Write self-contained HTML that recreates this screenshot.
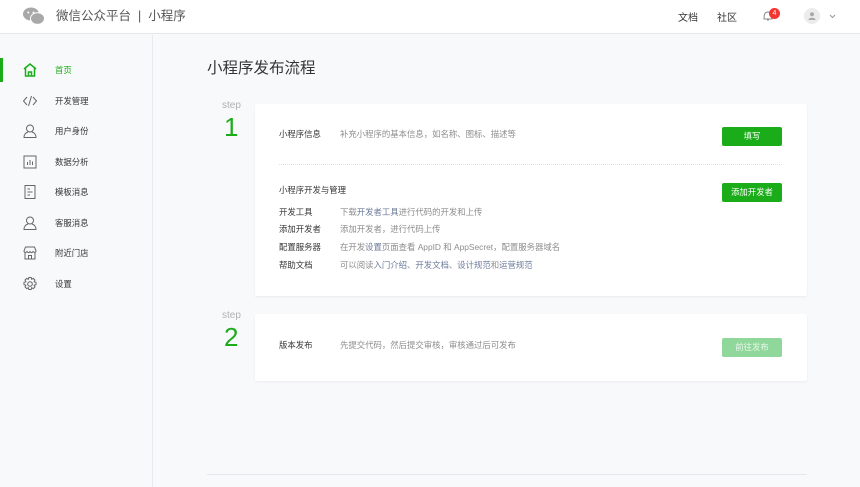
<!DOCTYPE html>
<html><head><meta charset="utf-8"><style>
*{margin:0;padding:0;box-sizing:border-box}
body{width:860px;height:487px;overflow:hidden;background:#f8f9fb;font-family:"Liberation Sans","Noto Sans CJK SC",sans-serif;position:relative;color:#353535}
.a{position:absolute;white-space:nowrap}
#hd{position:absolute;left:0;top:0;width:860px;height:34px;background:#fff;border-bottom:1px solid #e6e7ea}
#sb{position:absolute;left:0;top:35px;width:153px;height:452px;border-right:1px solid #e8e9ec;background:#f8f9fb}
.nav{position:absolute;left:55px;font-size:8.4px;color:#353535;line-height:12px}
.ic{position:absolute;left:22px;width:16px;height:16px}
.card{position:absolute;left:255px;width:552px;background:#fff;box-shadow:0 1px 2px rgba(0,0,0,.06);border-radius:2px}
.lb{position:absolute;left:24px;font-size:8.4px;color:#353535;line-height:12px;white-space:nowrap}
.ds{position:absolute;left:85px;font-size:8.4px;color:#8d8d8d;line-height:12px;white-space:nowrap}
.ds b{font-weight:normal;color:#6b7a99}
.btn{position:absolute;left:467px;width:60px;height:19px;background:#1aad19;color:#fff;font-size:8.4px;text-align:center;line-height:19px;border-radius:2px}
.st{position:absolute;left:222px;font-size:10px;color:#b2b2b2}
.num{position:absolute;font-size:26px;color:#1aad19;line-height:26px}
</style></head><body>
<div id="hd">
<svg class="a" style="left:23px;top:7px" width="22" height="18" viewBox="0 0 22 18"><ellipse cx="8" cy="7" rx="8" ry="6.5" fill="#a8a8a8"/><ellipse cx="14.5" cy="11.5" rx="7" ry="5.8" fill="#a8a8a8" stroke="#fff" stroke-width="1"/><circle cx="5.3" cy="5.5" r="1" fill="#fff"/><circle cx="10.5" cy="5.5" r="1" fill="#fff"/></svg>
<div class="a" style="left:56px;top:8px;font-size:12.5px;color:#555;line-height:17px">微信公众平台<span style="margin:0 7px">|</span>小程序</div>
<div class="a" style="left:678px;top:9px;font-size:10px;color:#353535">文档</div>
<div class="a" style="left:717px;top:9px;font-size:10px;color:#353535">社区</div>
<svg class="a" style="left:762px;top:10px" width="12" height="12" viewBox="0 0 12 12"><path d="M2 9 C2 4 3 2 6 2 C9 2 10 4 10 9 Z M5 10h2" fill="none" stroke="#888" stroke-width="1"/></svg>
<div class="a" style="left:769px;top:8px;width:11px;height:11px;border-radius:50%;background:#f43530;color:#fff;font-size:7px;text-align:center;line-height:11px">4</div>
<div class="a" style="left:804px;top:8px;width:16px;height:16px;border-radius:50%;background:#ececec"></div>
<svg class="a" style="left:807px;top:11px" width="10" height="10" viewBox="0 0 10 10"><circle cx="5" cy="3.3" r="2" fill="#aaa"/><path d="M1.5 9 C1.5 6 8.5 6 8.5 9Z" fill="#aaa"/></svg>
<svg class="a" style="left:829px;top:14px" width="7" height="5" viewBox="0 0 7 5"><path d="M1 1 L3.5 3.5 L6 1" fill="none" stroke="#999"/></svg>
</div>
<div id="sb"></div>
<div class="a" style="left:0;top:58px;width:3px;height:24px;background:#1aad19"></div>
<svg class="ic" style="top:62px" viewBox="0 0 16 16"><path d="M2 7 L8 2 L14 7 M3.5 6 V14 H12.5 V6 M6.5 14 V10 H9.5 V14" fill="none" stroke="#1aad19" stroke-width="1.5"/></svg>
<div class="nav" style="top:64px;color:#1aad19">首页</div>
<svg class="ic" style="top:93px" viewBox="0 0 16 16"><path d="M5 4 L1.5 8 L5 12 M11 4 L14.5 8 L11 12 M9.5 3 L6.5 13" fill="none" stroke="#666" stroke-width="1"/></svg>
<div class="nav" style="top:95px">开发管理</div>
<svg class="ic" style="top:123px" viewBox="0 0 16 16"><circle cx="8" cy="5.5" r="3.5" fill="none" stroke="#666"/><path d="M6 9 C3 10 2 12 2 14.5 H14 C14 12 13 10 10 9" fill="none" stroke="#666"/></svg>
<div class="nav" style="top:125px">用户身份</div>
<svg class="ic" style="top:154px" viewBox="0 0 16 16"><rect x="2" y="2" width="12" height="12" fill="none" stroke="#666"/><path d="M5.5 11V8 M8 11V6 M10.5 11V7.5" stroke="#666"/></svg>
<div class="nav" style="top:156px">数据分析</div>
<svg class="ic" style="top:184px" viewBox="0 0 16 16"><rect x="3" y="1.5" width="10" height="13" fill="none" stroke="#666"/><path d="M5.5 5H8 M5.5 8H10.5 M5.5 11H8" stroke="#666"/></svg>
<div class="nav" style="top:186px">模板消息</div>
<svg class="ic" style="top:215px" viewBox="0 0 16 16"><circle cx="8" cy="5.5" r="3.5" fill="none" stroke="#666"/><path d="M6 9 C3 10 2 12 2 14.5 H14 C14 12 13 10 10 9" fill="none" stroke="#666"/></svg>
<div class="nav" style="top:217px">客服消息</div>
<svg class="ic" style="top:245px" viewBox="0 0 16 16"><path d="M2 6 L3.5 2 H12.5 L14 6 C14 7.5 12 8 11 6.5 C10 8 9 8 8 6.5 C7 8 6 8 5 6.5 C4 8 2 7.5 2 6Z M3 7.5V14H13V7.5 M6.5 14V10.5H9.5V14" fill="none" stroke="#666"/></svg>
<div class="nav" style="top:247px">附近门店</div>
<svg class="ic" style="top:276px" viewBox="0 0 16 16"><circle cx="8" cy="8" r="2.3" fill="none" stroke="#666"/><path d="M6.8 1.5H9.2L9.6 3.3L11.3 2.4L13 4.1L12.1 5.8L14 6.3V8.7L12.1 9.2L13 10.9L11.3 12.6L9.6 11.7L9.2 13.5H6.8L6.4 11.7L4.7 12.6L3 10.9L3.9 9.2L2 8.7V6.3L3.9 5.8L3 4.1L4.7 2.4L6.4 3.3Z" fill="none" stroke="#666"/></svg>
<div class="nav" style="top:278px">设置</div>

<div class="a" style="left:207px;top:59px;font-size:15.5px;color:#353535;line-height:20px">小程序发布流程</div>

<div class="st" style="top:100px">step</div>
<div class="num" style="left:224px;top:114px">1</div>
<div class="card" style="top:104px;height:192px">
<div class="lb" style="top:24px">小程序信息</div>
<div class="ds" style="top:24px">补充小程序的基本信息，如名称、图标、描述等</div>
<div class="btn" style="top:23px">填写</div>
<div class="a" style="left:24px;top:60px;width:503px;border-top:1px dotted #e0e0e0"></div>
<div class="lb" style="top:80px">小程序开发与管理</div>
<div class="btn" style="top:79px">添加开发者</div>
<div class="lb" style="top:102px">开发工具</div><div class="ds" style="top:102px">下载<b>开发者工具</b>进行代码的开发和上传</div>
<div class="lb" style="top:119px">添加开发者</div><div class="ds" style="top:119px">添加开发者，进行代码上传</div>
<div class="lb" style="top:137px">配置服务器</div><div class="ds" style="top:137px">在开发<b>设置</b>页面查看 AppID 和 AppSecret，配置服务器域名</div>
<div class="lb" style="top:155px">帮助文档</div><div class="ds" style="top:155px">可以阅读<b>入门介绍</b>、<b>开发文档</b>、<b>设计规范</b>和<b>运营规范</b></div>
</div>

<div class="st" style="top:310px">step</div>
<div class="num" style="left:224px;top:324px">2</div>
<div class="card" style="top:314px;height:67px">
<div class="lb" style="top:25px">版本发布</div>
<div class="ds" style="top:25px">先提交代码，然后提交审核，审核通过后可发布</div>
<div class="btn" style="top:24px;background:#8fd79a;color:#e8f7ea">前往发布</div>
</div>
<div class="a" style="left:207px;top:474px;width:600px;border-top:1px solid #e6e7ea"></div>
</body></html>
